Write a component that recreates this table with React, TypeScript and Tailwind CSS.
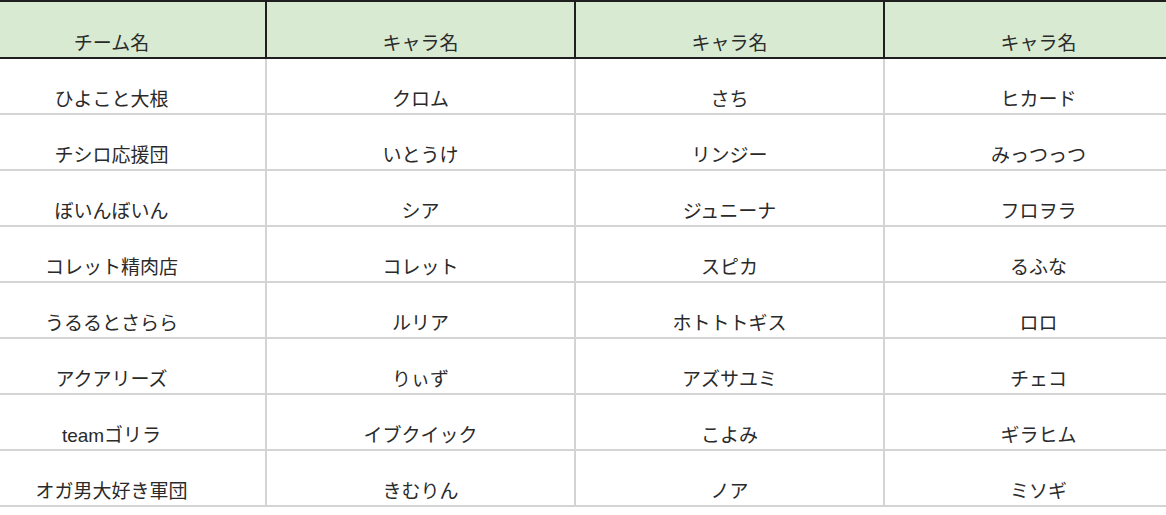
const rows: string[][] = [
  ['ひよこと大根', 'クロム', 'さち', 'ヒカード'],
  ['チシロ応援団', 'いとうけ', 'リンジー', 'みっつっつ'],
  ['ぼいんぼいん', 'シア', 'ジュニーナ', 'フロヲラ'],
  ['コレット精肉店', 'コレット', 'スピカ', 'るふな'],
  ['うるるとさらら', 'ルリア', 'ホトトトギス', 'ロロ'],
  ['アクアリーズ', 'りぃず', 'アズサユミ', 'チェコ'],
  ['teamゴリラ', 'イブクイック', 'こよみ', 'ギラヒム'],
  ['オガ男大好き軍団', 'きむりん', 'ノア', 'ミソギ'],
]

const headers = ['チーム名', 'キャラ名', 'キャラ名', 'キャラ名']

export default function App() {
  return (
    <div
      className="w-[1166px] h-[515px] overflow-hidden bg-white text-[#2a2a2a]"
      style={{ fontFamily: '"Liberation Sans", "Noto Sans CJK JP", sans-serif' }}
    >
      <div className="ml-[-42px] w-[1236px]">
        {/* Header */}
        <div className="grid grid-cols-[309px_309px_309px_309px] bg-[#d9ead3] border-t-2 border-b-2 border-[#1f1f1f]">
          {headers.map((h, i) => (
            <div
              key={i}
              className="h-[55px] flex items-end justify-center pb-[1px] border-r-2 border-[#1f1f1f] text-[19px] leading-[24px]"
            >
              {h}
            </div>
          ))}
        </div>

        {/* Body */}
        {rows.map((row, r) => (
          <div key={r} className="grid grid-cols-[309px_309px_309px_309px]">
            {row.map((cell, c) => (
              <div
                key={c}
                className="h-[56px] flex items-end justify-center pb-[1px] border-r-2 border-b-2 border-[#d4d4d4] text-[19px] leading-[24px]"
              >
                {cell}
              </div>
            ))}
          </div>
        ))}
      </div>
    </div>
  )
}
